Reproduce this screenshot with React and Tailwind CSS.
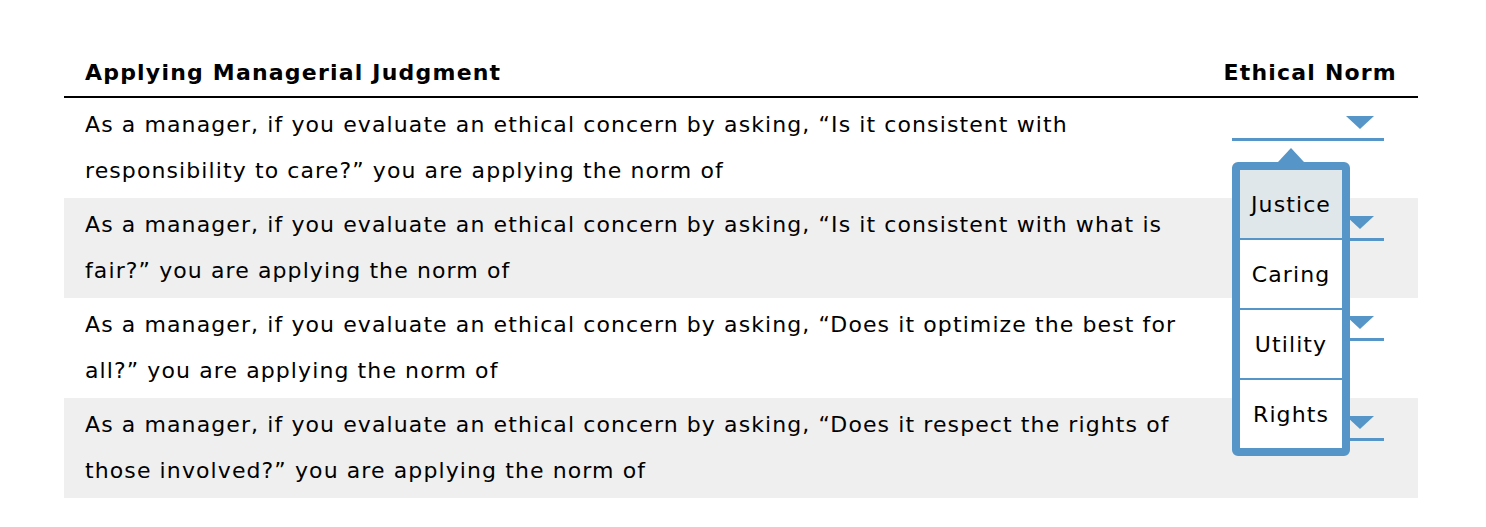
import React from 'react';

const rows = [
  'As a manager, if you evaluate an ethical concern by asking, \u201cIs it consistent with responsibility to care?\u201d you are applying the norm of',
  'As a manager, if you evaluate an ethical concern by asking, \u201cIs it consistent with what is fair?\u201d you are applying the norm of',
  'As a manager, if you evaluate an ethical concern by asking, \u201cDoes it optimize the best for all?\u201d you are applying the norm of',
  'As a manager, if you evaluate an ethical concern by asking, \u201cDoes it respect the rights of those involved?\u201d you are applying the norm of',
];

const options = ['Justice', 'Caring', 'Utility', 'Rights'];

const Select = () => (
  <div className="w-[152px] h-[43px] border-b-[3px] border-[#5595c7] flex justify-end items-start pt-[18px] pr-[10px]">
    <svg width="28" height="13" viewBox="0 0 28 13">
      <polygon points="0,0 28,0 14,13" fill="#5595c7" />
    </svg>
  </div>
);

const App = () => {
  return (
    <div
      className="w-[1486px] h-[527px] bg-white pt-[50px] pl-[64px] text-[22px] tracking-[1.1px] text-black"
      style={{ fontFamily: 'Verdana, "DejaVu Sans", sans-serif' }}
    >
      <div className="relative w-[1354px]">
        <div className="flex border-b-2 border-black font-bold leading-[46px] tracking-[1.2px]">
          <div className="flex-1 pl-[21px]">Applying Managerial Judgment</div>
          <div className="w-[206px] pr-[21px] text-right">Ethical Norm</div>
        </div>

        {rows.map((text, i) => (
          <div key={i} className={`flex ${i % 2 === 1 ? 'bg-[#efefef]' : 'bg-white'}`}>
            <div className="flex-1 pl-[21px] pr-[21px] py-[4px] leading-[46px]">{text}</div>
            <div className="w-[206px] pl-[20px]">
              <Select />
            </div>
          </div>
        ))}

        {/* open dropdown of the first row */}
        <div className="absolute left-[1168px] top-[98px] w-[118px] flex flex-col items-center">
          <svg width="26" height="14" viewBox="0 0 26 14" className="block">
            <polygon points="0,14 13,0 26,14" fill="#5595c7" />
          </svg>
          <div className="w-[118px] border-[8px] border-[#5595c7] rounded-[6px] bg-white overflow-hidden">
            {options.map((opt, i) => (
              <div
                key={opt}
                className={`flex items-center justify-center ${i > 0 ? 'border-t-2 border-[#5595c7] h-[70px]' : 'h-[68px] bg-[#dfe7ea]'}`}
              >
                {opt}
              </div>
            ))}
          </div>
        </div>
      </div>
    </div>
  );
};

export default App;
